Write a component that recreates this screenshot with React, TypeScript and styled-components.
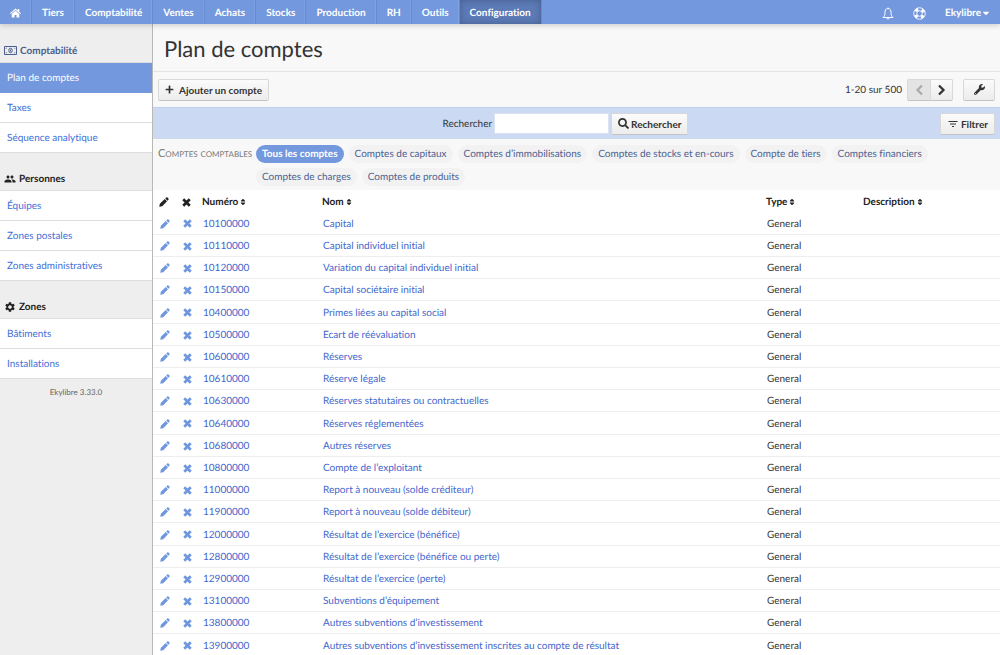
import React from "react";
import styled, { createGlobalStyle, css } from "styled-components";
import { FaPlus, FaWrench, FaSearch, FaSort, FaCaretDown } from "react-icons/fa";
import { MdSettings, MdFilterList, MdPeople } from "react-icons/md";

const GlobalStyle = createGlobalStyle`
  * { box-sizing: border-box; }
  body {
    margin: 0;
    background: #fff;
    color: #333;
    font: 10px/14px Lato, "Liberation Sans", sans-serif;
    font-variant-ligatures: none;
    text-rendering: geometricPrecision;
  }
  button, input { font: inherit; color: inherit; }
  a { color: #3e6fd8; text-decoration: none; }
  svg { flex: none; }
`;

const Page = styled.div`
  min-height: 100vh;
  display: flex;
  flex-direction: column;
  overflow-x: hidden;
`;

const TopBar = styled.header`
  position: relative;
  z-index: 1;
  display: flex;
  height: 24px;
  background: #7398de;
  box-shadow: 0 1px 6px rgba(0, 0, 0, 0.2);
`;

const Nav = styled.nav`
  display: flex;
  flex: 1;
`;

const NavLink = styled.a<{ $active?: boolean }>`
  display: flex;
  align-items: center;
  padding: 2px 10px 0;
  color: #fff;
  font-weight: 700;
  border-right: 1px solid #668bd3;
  box-shadow: inset -1px 0 0 #7da1e5;
  ${(p) => p.$active && css`
    background: #5b7ab6;
    box-shadow: inset 0 0 6px rgba(0, 0, 0, 0.25);
  `}
`;

const UserTools = styled.div`
  display: flex;
  align-items: center;
  gap: 19px;
  padding: 2px 9px 0 0;
  a { display: flex; align-items: center; color: #fff; font-weight: 700; }
`;

const Body = styled.div`
  display: flex;
  flex: 1;
`;

const Sidebar = styled.aside`
  width: 153px;
  flex: none;
  background: #eee;
  border-right: 1px solid #b8b8b8;
`;

const SideTitle = styled.h2<{ $current?: boolean }>`
  display: flex;
  align-items: center;
  gap: 3px;
  height: ${(p) => (p.$current ? 39 : 38)}px;
  margin: 0;
  padding: 15px 4px 0;
  font-size: 10px;
  line-height: 14px;
  color: ${(p) => (p.$current ? "#4a5f8c" : "#222")};
  border-bottom: 1px solid #ddd;
`;

const SideLink = styled.a<{ $active?: boolean }>`
  display: flex;
  align-items: center;
  height: 30px;
  padding: 1px 7px 0;
  background: #fff;
  border-bottom: 1px solid #ddd;
  ${(p) => p.$active && css`
    color: #fff;
    background: #7398de;
    border-color: #7398de;
  `}
`;

const Version = styled.p`
  margin: 6px 0;
  font-size: 8px;
  text-align: center;
  color: #666;
`;

const Main = styled.main`
  flex: 1;
  min-width: 0;
`;

const Title = styled.h1`
  height: 48px;
  margin: 0;
  padding: 0 11px;
  font-size: 22px;
  font-weight: 400;
  line-height: 50px;
  background: #f8f8f8;
  border-bottom: 1px solid #e4e4e4;
`;

const Toolbar = styled.div`
  display: flex;
  align-items: center;
  height: 35px;
  padding: 0 5px;
  background: #f8f8f8;
`;

const Count = styled.span`
  margin-left: auto;
  margin-right: 5px;
`;

const Button = styled.button<{ $gap?: number }>`
  display: flex;
  align-items: center;
  justify-content: center;
  gap: ${(p) => p.$gap ?? 2}px;
  height: 22px;
  padding: 0 6px;
  font-weight: 700;
  color: #333;
  background: linear-gradient(#fbfbfb, #ececec);
  border: 1px solid #d8d8d8;
  border-bottom-color: #c4c4c4;
  border-radius: 2px;
`;

const PageButton = styled(Button)`
  width: 23px;
  padding: 0;
  border-radius: 0 2px 2px 0;
  &:disabled {
    color: #aaa;
    background: #e4e4e4;
    border-radius: 2px 0 0 2px;
    border-right: 0;
  }
`;

const ToolButton = styled(Button)`
  width: 32px;
  margin-left: 10px;
`;

const SearchBar = styled.form`
  display: grid;
  grid-template-columns: 1fr auto 1fr;
  align-items: center;
  height: 32px;
  padding: 0 5px;
  background: #cbd9f3;
  border-top: 1px solid #c1d0ee;
  > ${Button} { justify-self: end; }
`;

const SearchField = styled.div`
  grid-column: 2;
  display: flex;
  align-items: center;
  gap: 2px;
  padding-right: 22px;
`;

const SearchInput = styled.input`
  width: 115px;
  height: 21px;
  padding: 0 4px;
  background: #fff;
  border: 1px solid #dbe3f2;
`;

const Scopes = styled.div`
  display: flex;
  align-items: flex-start;
  padding: 6px 5px 4px;
  background: #f8f8f8;
`;

const ScopeLabel = styled.span`
  width: 98px;
  flex: none;
  font-size: 11px;
  line-height: 18px;
  font-variant: small-caps;
  color: #777;
`;

const ScopeList = styled.div`
  display: flex;
  flex-wrap: wrap;
  gap: 5px;
`;

const Scope = styled.a<{ $active?: boolean }>`
  height: 18px;
  padding: 0 6px;
  line-height: 18px;
  border-radius: 9px;
  color: ${(p) => (p.$active ? "#fff" : "#4d5f8f")};
  background: ${(p) => (p.$active ? "#7398de" : "#f2f2f2")};
  font-weight: ${(p) => (p.$active ? 700 : 400)};
`;

const Table = styled.table`
  width: 100%;
  border-collapse: collapse;
  table-layout: fixed;
  th, td { padding: 2px 1px 0; text-align: left; vertical-align: middle; }
  th { height: 22px; padding: 2px 0 0; color: #222; }
  td { height: 22px; border-bottom: 1px solid #eee; }
  tbody tr:nth-child(5n) td { height: 23px; }
  svg { display: block; }
`;

const Col = styled.col<{ $width?: string }>`
  width: ${(p) => p.$width ?? "auto"};
`;

const TextLink = styled.a`
  color: #3f66cc;
`;

const IconCell = styled.div`
  display: flex;
  justify-content: center;
  width: 21px;
  color: #222;
  a { color: #6f97e0; }
`;

const SortLabel = styled.span`
  display: flex;
  align-items: center;
  gap: 1px;
`;

const HomeIcon = () => (
  <svg width="11" height="10" viewBox="0 0 22 20" fill="currentColor" aria-hidden="true">
    <path d="M11 5.500 3.500 12V19H9v-5h4v5h5.500v-7z" />
    <path d="M11 1 0 10.300l1.300 1.600L11 3.900l9.700 8L22 10.300l-3.500-3V2h-3v2.800z" />
  </svg>
);

const BellIcon = () => (
  <svg width="12" height="13" viewBox="0 0 24 26" fill="none" stroke="currentColor" strokeWidth="2" aria-hidden="true">
    <path d="M12 3C7 3 6 7 6 11c0 6-2 8-4 10h20c-2-2-4-4-4-10 0-4-1-8-6-8zM12 3V1M9.500 23.500h5" />
  </svg>
);

const LifeRingIcon = () => (
  <svg width="13" height="13" viewBox="0 0 26 26" fill="none" stroke="currentColor" aria-hidden="true">
    <circle cx="13" cy="13" r="11.500" strokeWidth="1.800" />
    <circle cx="13" cy="13" r="5.500" strokeWidth="1.800" />
    <circle cx="13" cy="13" r="8.500" strokeWidth="6" strokeDasharray="6 7.352" strokeDashoffset="-3.676" />
  </svg>
);

const MoneyIcon = () => (
  <svg width="13" height="9" viewBox="0 0 26 18" fill="none" stroke="currentColor" strokeWidth="2" aria-hidden="true">
    <path d="M1 1h24v16H1z" />
    <path d="M4 6V4h2M20 4h2v2M4 12v2h2M20 14h2v-2" strokeWidth="1" />
    <ellipse cx="13" cy="9" rx="3.500" ry="4.500" />
    <path d="M13 7v4" />
  </svg>
);

const PencilIcon = () => (
  <svg width="10" height="10" viewBox="0 0 20 20" fill="currentColor" aria-hidden="true">
    <path d="M.5 19.500l1.200-6L11.500 4 16 8.500 6.500 18.300zM12.500 3l1.600-1.600c1-1 2.200-1 3.200 0l1.300 1.300c1 1 1 2.200 0 3.200L17 7.500z" />
  </svg>
);

const CrossIcon = () => (
  <svg width="9" height="9" viewBox="0 0 18 18" fill="none" stroke="currentColor" strokeWidth="5.500" aria-hidden="true">
    <path d="M2.500 2.500l13 13M15.500 2.500l-13 13" />
  </svg>
);

const ChevronIcon = ({ back }: { back?: boolean }) => (
  <svg width="9" height="12" viewBox="0 0 18 24" fill="none" stroke="currentColor" strokeWidth="4.500" aria-hidden="true">
    <path d={back ? "M14 3l-9 9 9 9" : "M4 3l9 9-9 9"} />
  </svg>
);

const nav = ["Tiers", "Comptabilité", "Ventes", "Achats", "Stocks", "Production", "RH", "Outils", "Configuration"];

const sections = [
  { title: "Comptabilité", icon: <MoneyIcon />, links: ["Plan de comptes", "Taxes", "Séquence analytique"] },
  { title: "Personnes", icon: <MdPeople size={12} />, links: ["Équipes", "Zones postales", "Zones administratives"] },
  { title: "Zones", icon: <MdSettings size={12} />, links: ["Bâtiments", "Installations"] },
];

const scopes = [
  "Tous les comptes", "Comptes de capitaux", "Comptes d’immobilisations", "Comptes de stocks et en-cours",
  "Compte de tiers", "Comptes financiers", "Comptes de charges", "Comptes de produits",
];

const accounts = [
  ["10100000", "Capital"],
  ["10110000", "Capital individuel initial"],
  ["10120000", "Variation du capital individuel initial"],
  ["10150000", "Capital sociétaire initial"],
  ["10400000", "Primes liées au capital social"],
  ["10500000", "Ecart de réévaluation"],
  ["10600000", "Réserves"],
  ["10610000", "Réserve légale"],
  ["10630000", "Réserves statutaires ou contractuelles"],
  ["10640000", "Réserves réglementées"],
  ["10680000", "Autres réserves"],
  ["10800000", "Compte de l’exploitant"],
  ["11000000", "Report à nouveau (solde créditeur)"],
  ["11900000", "Report à nouveau (solde débiteur)"],
  ["12000000", "Résultat de l’exercice (bénéfice)"],
  ["12800000", "Résultat de l’exercice (bénéfice ou perte)"],
  ["12900000", "Résultat de l’exercice (perte)"],
  ["13100000", "Subventions d’équipement"],
  ["13800000", "Autres subventions d’investissement"],
  ["13900000", "Autres subventions d’investissement inscrites au compte de résultat"],
];

export default function App() {
  return (
    <Page>
      <GlobalStyle />
      <TopBar>
        <Nav>
          <NavLink href="#" aria-label="Accueil"><HomeIcon /></NavLink>
          {nav.map((n) => <NavLink key={n} href="#" $active={n === "Configuration"}>{n}</NavLink>)}
        </Nav>
        <UserTools>
          <a href="#" aria-label="Notifications"><BellIcon /></a>
          <a href="#" aria-label="Aide"><LifeRingIcon /></a>
          <a href="#">Ekylibre<FaCaretDown size={10} /></a>
        </UserTools>
      </TopBar>
      <Body>
        <Sidebar>
          {sections.map((s, i) => (
            <section key={s.title}>
              <SideTitle $current={i === 0}>{s.icon}{s.title}</SideTitle>
              {s.links.map((l) => <SideLink key={l} href="#" $active={l === "Plan de comptes"}>{l}</SideLink>)}
            </section>
          ))}
          <Version>Ekylibre 3.33.0</Version>
        </Sidebar>
        <Main>
          <Title>Plan de comptes</Title>
          <Toolbar>
            <Button type="button" $gap={5}><FaPlus size={9} />Ajouter un compte</Button>
            <Count>1-20 sur 500</Count>
            <PageButton type="button" disabled aria-label="Page précédente"><ChevronIcon back /></PageButton>
            <PageButton type="button" aria-label="Page suivante"><ChevronIcon /></PageButton>
            <ToolButton type="button" aria-label="Outils de liste"><FaWrench size={11} /></ToolButton>
          </Toolbar>
          <SearchBar>
            <SearchField>
              <label htmlFor="q">Rechercher</label>
              <SearchInput id="q" type="text" />
              <Button type="button"><FaSearch size={11} />Rechercher</Button>
            </SearchField>
            <Button type="button"><MdFilterList size={12} />Filtrer</Button>
          </SearchBar>
          <Scopes>
            <ScopeLabel>Comptes comptables</ScopeLabel>
            <ScopeList>
              {scopes.map((s, i) => <Scope key={s} href="#" $active={i === 0}>{s}</Scope>)}
            </ScopeList>
          </Scopes>
          <Table>
            <colgroup>
              <Col $width="23px" />
              <Col $width="26px" />
              <Col $width="120px" />
              <Col />
              <Col $width="97px" />
              <Col $width="137px" />
            </colgroup>
            <thead>
              <tr>
                <th><IconCell><PencilIcon /></IconCell></th>
                <th><IconCell><CrossIcon /></IconCell></th>
                {["Numéro", "Nom", "Type", "Description"].map((h) => (
                  <th key={h}><SortLabel>{h}<FaSort size={8} /></SortLabel></th>
                ))}
              </tr>
            </thead>
            <tbody>
              {accounts.map(([num, name]) => (
                <tr key={num}>
                  <td><IconCell><a href="#" aria-label="Modifier"><PencilIcon /></a></IconCell></td>
                  <td><IconCell><a href="#" aria-label="Supprimer"><CrossIcon /></a></IconCell></td>
                  <td><TextLink href="#">{num}</TextLink></td>
                  <td><TextLink href="#">{name}</TextLink></td>
                  <td>General</td>
                  <td />
                </tr>
              ))}
            </tbody>
          </Table>
        </Main>
      </Body>
    </Page>
  );
}
